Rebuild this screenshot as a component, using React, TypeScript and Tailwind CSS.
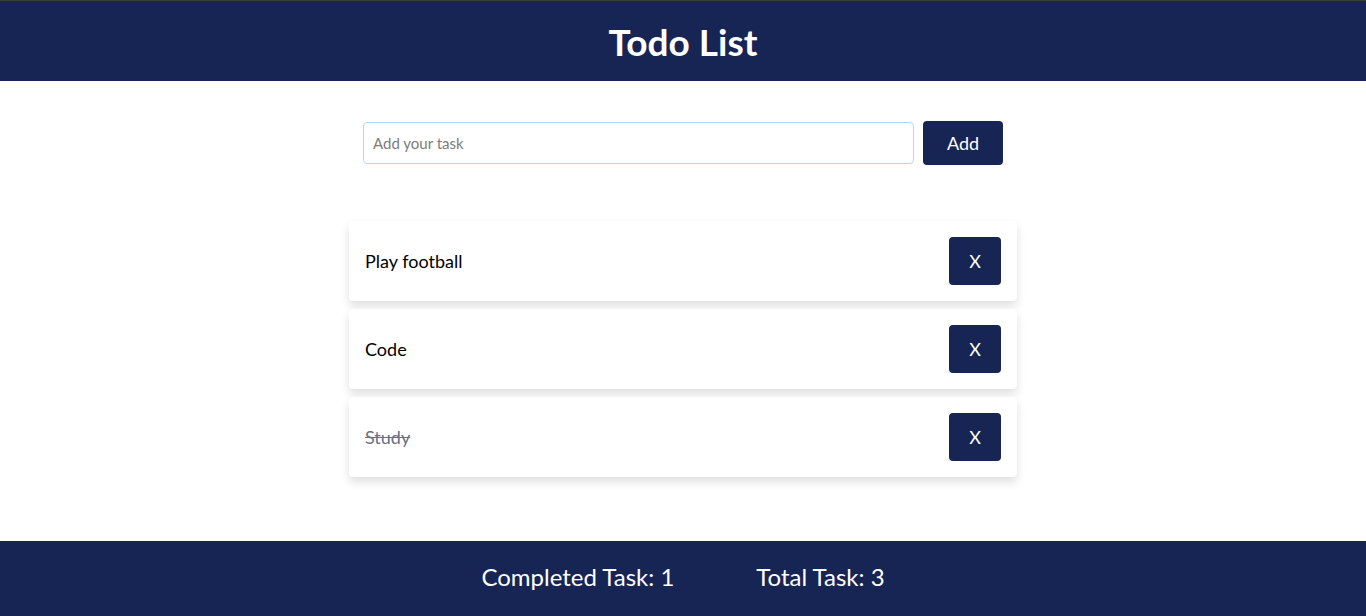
import { useState } from "react";

type Task = { id: number; text: string; done: boolean };

export default function App() {
  const [tasks, setTasks] = useState<Task[]>([
    { id: 1, text: "Play football", done: false },
    { id: 2, text: "Code", done: false },
    { id: 3, text: "Study", done: true },
  ]);
  const [input, setInput] = useState("");

  const addTask = () => {
    if (!input.trim()) return;
    setTasks([...tasks, { id: Date.now(), text: input.trim(), done: false }]);
    setInput("");
  };

  const completed = tasks.filter((t) => t.done).length;

  return (
    <div className="min-h-screen flex flex-col bg-white font-['Lato',sans-serif]">
      <header className="h-[81px] border-t border-[#3b3b3b] bg-[#172554] flex items-center justify-center">
        <h1 className="text-[37px] font-bold text-white leading-none">Todo List</h1>
      </header>

      <main className="flex flex-col items-center pt-10">
        <div className="flex items-center gap-[9px]">
          <input
            value={input}
            onChange={(e) => setInput(e.target.value)}
            placeholder="Add your task"
            className="w-[551px] h-[42px] rounded border border-[#b6d4fb] px-[9px] text-[15px] text-gray-800 placeholder:text-[#7c7c7c] outline-none"
          />
          <button
            onClick={addTask}
            className="w-[80px] h-[44px] rounded bg-[#172554] text-white text-[18px]"
          >
            Add
          </button>
        </div>

        <ul className="mt-[56px] w-[668px] flex flex-col gap-2">
          {tasks.map((task) => (
            <li
              key={task.id}
              className="h-20 flex items-center justify-between px-4 rounded bg-white shadow-[0_5px_10px_rgba(0,0,0,0.13)]"
            >
              <span
                onClick={() =>
                  setTasks(tasks.map((t) => (t.id === task.id ? { ...t, done: !t.done } : t)))
                }
                className={
                  task.done
                    ? "text-[18px] text-gray-500 line-through cursor-pointer"
                    : "text-[18px] text-black cursor-pointer"
                }
              >
                {task.text}
              </span>
              <button
                onClick={() => setTasks(tasks.filter((t) => t.id !== task.id))}
                className="w-[52px] h-12 rounded bg-[#172554] text-white text-[18px]"
              >
                X
              </button>
            </li>
          ))}
        </ul>
      </main>

      <footer className="mt-16 h-[75px] pb-1 bg-[#172554] flex items-center justify-center gap-[82px] text-white text-[24px]">
        <span>Completed Task: {completed}</span>
        <span>Total Task: {tasks.length}</span>
      </footer>
    </div>
  );
}
